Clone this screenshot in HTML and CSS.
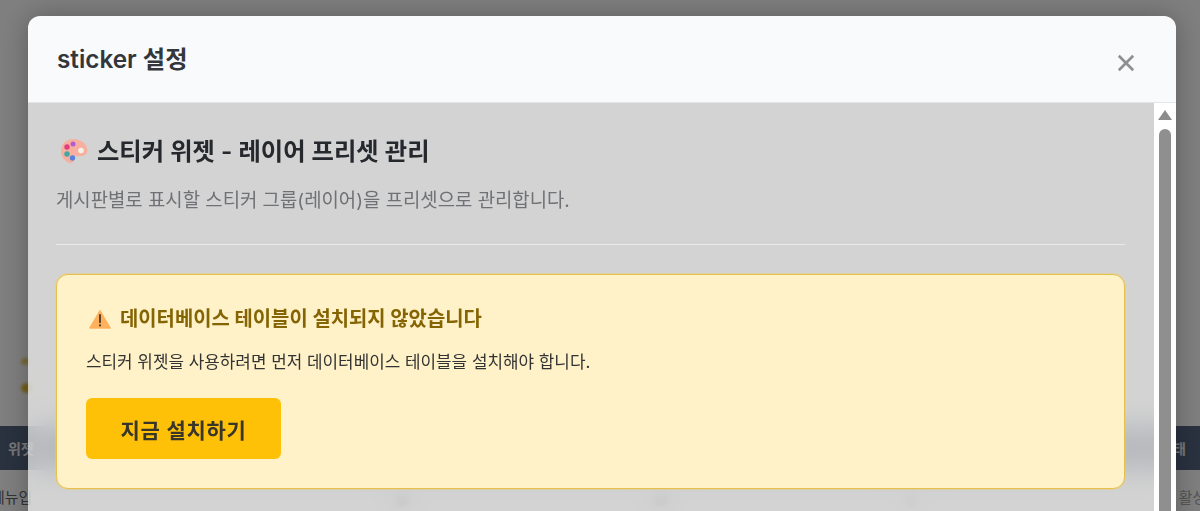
FILE: index.html
```html
<!DOCTYPE html>
<html lang="ko">
<head>
<meta charset="utf-8">
<title>sticker 설정</title>
<link rel="stylesheet" href="styles.css">
</head>
<body>
<main class="page">
  <div class="page-top">
    <span class="dot"></span>
    <span class="dot dot-lg"></span>
  </div>
  <div class="table-head"><span>위젯</span><span>상태</span></div>
  <div class="table-row">
    <span class="cell-first">메뉴입</span>
    <span class="blob b1"></span>
    <span class="blob b2"></span>
    <span class="blob b3"></span>
    <span class="cell-last">활성</span>
  </div>
</main>
<div class="overlay">
  <section class="modal">
    <header class="modal-head">
      <h2 class="modal-title">sticker 설정</h2>
      <svg class="close" viewBox="0 0 20 20" aria-label="닫기"><path d="M2 2 L18 18 M18 2 L2 18"/></svg>
    </header>
    <div class="modal-body">
      <div class="content">
        <h3 class="heading">
          <svg class="palette" viewBox="0 0 28 26">
            <path d="M13 1C6 1 1 6 1 13c0 6 4 11 9 12 3 .5 4-1 3.500-3-.5-2 .5-4 3-4h4c4 0 7-2 7-5.500C27.500 6 21 1 13 1z" fill="#f7b0a0"/>
            <circle cx="21" cy="12.500" r="2.800" fill="#f4f1ea"/>
            <circle cx="7" cy="9" r="2.700" fill="#e0407f"/>
            <circle cx="13" cy="6" r="2.500" fill="#b35ad6"/>
            <circle cx="7" cy="16" r="2.700" fill="#3fa9a0"/>
            <circle cx="12.500" cy="20" r="2.700" fill="#5a80dc"/>
          </svg>
          <span>스티커 위젯 - 레이어 프리셋 관리</span>
        </h3>
        <p class="lead">게시판별로 표시할 스티커 그룹(레이어)을 프리셋으로 관리합니다.</p>
        <hr class="rule">
        <div class="alert">
          <h4 class="alert-title">
            <svg class="warn" viewBox="0 0 24 21">
              <path d="M12 1 L23.500 20.500 H.5 Z" fill="#ffb05c" stroke="#ffb05c" stroke-linejoin="round"/>
              <rect x="11" y="5" width="2" height="10" rx="1" fill="#4a3a2a"/>
              <circle cx="12" cy="17.500" r="1.200" fill="#4a3a2a"/>
            </svg>
            <span>데이터베이스 테이블이 설치되지 않았습니다</span>
          </h4>
          <p class="alert-text">스티커 위젯을 사용하려면 먼저 데이터베이스 테이블을 설치해야 합니다.</p>
          <button class="install" type="button">지금 설치하기</button>
        </div>
      </div>
      <div class="scrollbar">
        <span class="arrow"></span>
        <span class="thumb"></span>
      </div>
    </div>
  </section>
</div>
</body>
</html>
```
FILE: styles.css
```css
* { box-sizing: border-box; }
html, body { margin: 0; height: 511px; overflow: hidden; }
body {
  background: #fff;
  font-family: Inter, "Noto Sans CJK KR", sans-serif;
  color: #212529;
}
.page {
  height: 511px;
  display: flex;
  flex-direction: column;
  background: #fff;
}
.page-top {
  height: 426px;
  padding: 358px 0 0 21px;
  display: flex;
  flex-direction: column;
  gap: 18px;
}
.dot { width: 9px; height: 7px; border-radius: 50%; background: #f0d070; filter: blur(1.500px); }
.dot-lg { width: 12px; height: 10px; background: #e8c030; }
.table-head {
  height: 44px;
  background: #55647f;
  color: #f0f0f0;
  font-size: 14px;
  font-weight: 700;
  display: flex;
  justify-content: space-between;
  align-items: center;
  padding: 0 14px 0 8px;
}
.table-row {
  flex: 1;
  position: relative;
  font-size: 15px;
  color: #666;
  display: flex;
  justify-content: space-between;
  padding-top: 16px;
}
.cell-first { margin-left: -9px; }
.cell-last { margin-right: -6px; color: #aaa; }
.blob { position: absolute; top: 22px; width: 16px; height: 14px; border-radius: 50%; background: #888; filter: blur(2px); }
.b1 { left: 394px; }
.b2 { left: 653px; }
.b3 { left: 905px; width: 12px; background: #aaa; }
.overlay {
  position: fixed;
  inset: 0;
  background: rgba(0, 0, 0, .5);
  padding: 16px 24px 0 28px;
}
.modal {
  height: 600px;
  border-radius: 12px 12px 0 0;
  overflow: hidden;
  box-shadow: 0 0 28px rgba(0, 0, 0, .28);
  display: flex;
  flex-direction: column;
}
.modal-head {
  height: 87px;
  flex: none;
  background: #f9fafc;
  border-bottom: 1px solid #e3e5e8;
  display: flex;
  justify-content: space-between;
  align-items: flex-start;
  padding: 28px 41px 0 29px;
}
.modal-title { margin: 0; font-size: 24.300px; line-height: 30px; font-weight: 600; color: #33363a; }
.close { width: 18px; height: 18px; margin-top: 10px; fill: none; stroke: #8f8f8f; stroke-width: 3; }
.modal-body {
  flex: 1;
  display: flex;
  background: rgba(255, 255, 255, .66);
  backdrop-filter: blur(14px);
}
.content { flex: 1; padding: 32px 29px 0 28px; }
.heading {
  margin: 0;
  display: flex;
  align-items: center;
  gap: 9px;
  font-size: 24.300px;
  line-height: 32px;
  font-weight: 600;
  color: #25282c;
}
.palette { width: 28px; height: 26px; margin-left: 4px; }
.lead { margin: 19px 0 0; font-size: 18.850px; line-height: 30px; color: #6f7174; }
.rule { margin: 28px 0 0; border: 0; border-top: 1px solid #e9eaeb; }
.alert {
  margin-top: 29px;
  height: 215px;
  background: #fff2c9;
  border: 1px solid #e6c04a;
  box-shadow: 0 0 0 1px rgba(240, 205, 100, .35);
  border-radius: 12px;
  padding: 29px 29px;
}
.alert-title {
  margin: 0;
  display: flex;
  align-items: center;
  gap: 9px;
  font-size: 19.900px;
  line-height: 30px;
  font-weight: 700;
  color: #856404;
}
.warn { width: 22px; height: 20px; margin-left: 3px; }
.alert-text { margin: 15px 0 0; font-size: 16.900px; line-height: 26px; color: #333; }
.install {
  display: block;
  margin-top: 23px;
  width: 195px;
  height: 61px;
  border: 0;
  border-radius: 6px;
  background: #ffc107;
  color: #38352a;
  font: 600 21px Inter, "Noto Sans CJK KR", sans-serif;
  letter-spacing: .7px;
}
.scrollbar {
  flex: none;
  width: 22px;
  background: #fff;
  padding: 7px 5px 0;
  display: flex;
  flex-direction: column;
  align-items: center;
  gap: 9px;
}
.arrow { width: 0; height: 0; border: 7px solid transparent; border-top: 0; border-bottom: 10px solid #8c8c8c; }
.thumb { width: 12px; flex: 1; border-radius: 6px 6px 0 0; background: #8f8f8f; }
```
